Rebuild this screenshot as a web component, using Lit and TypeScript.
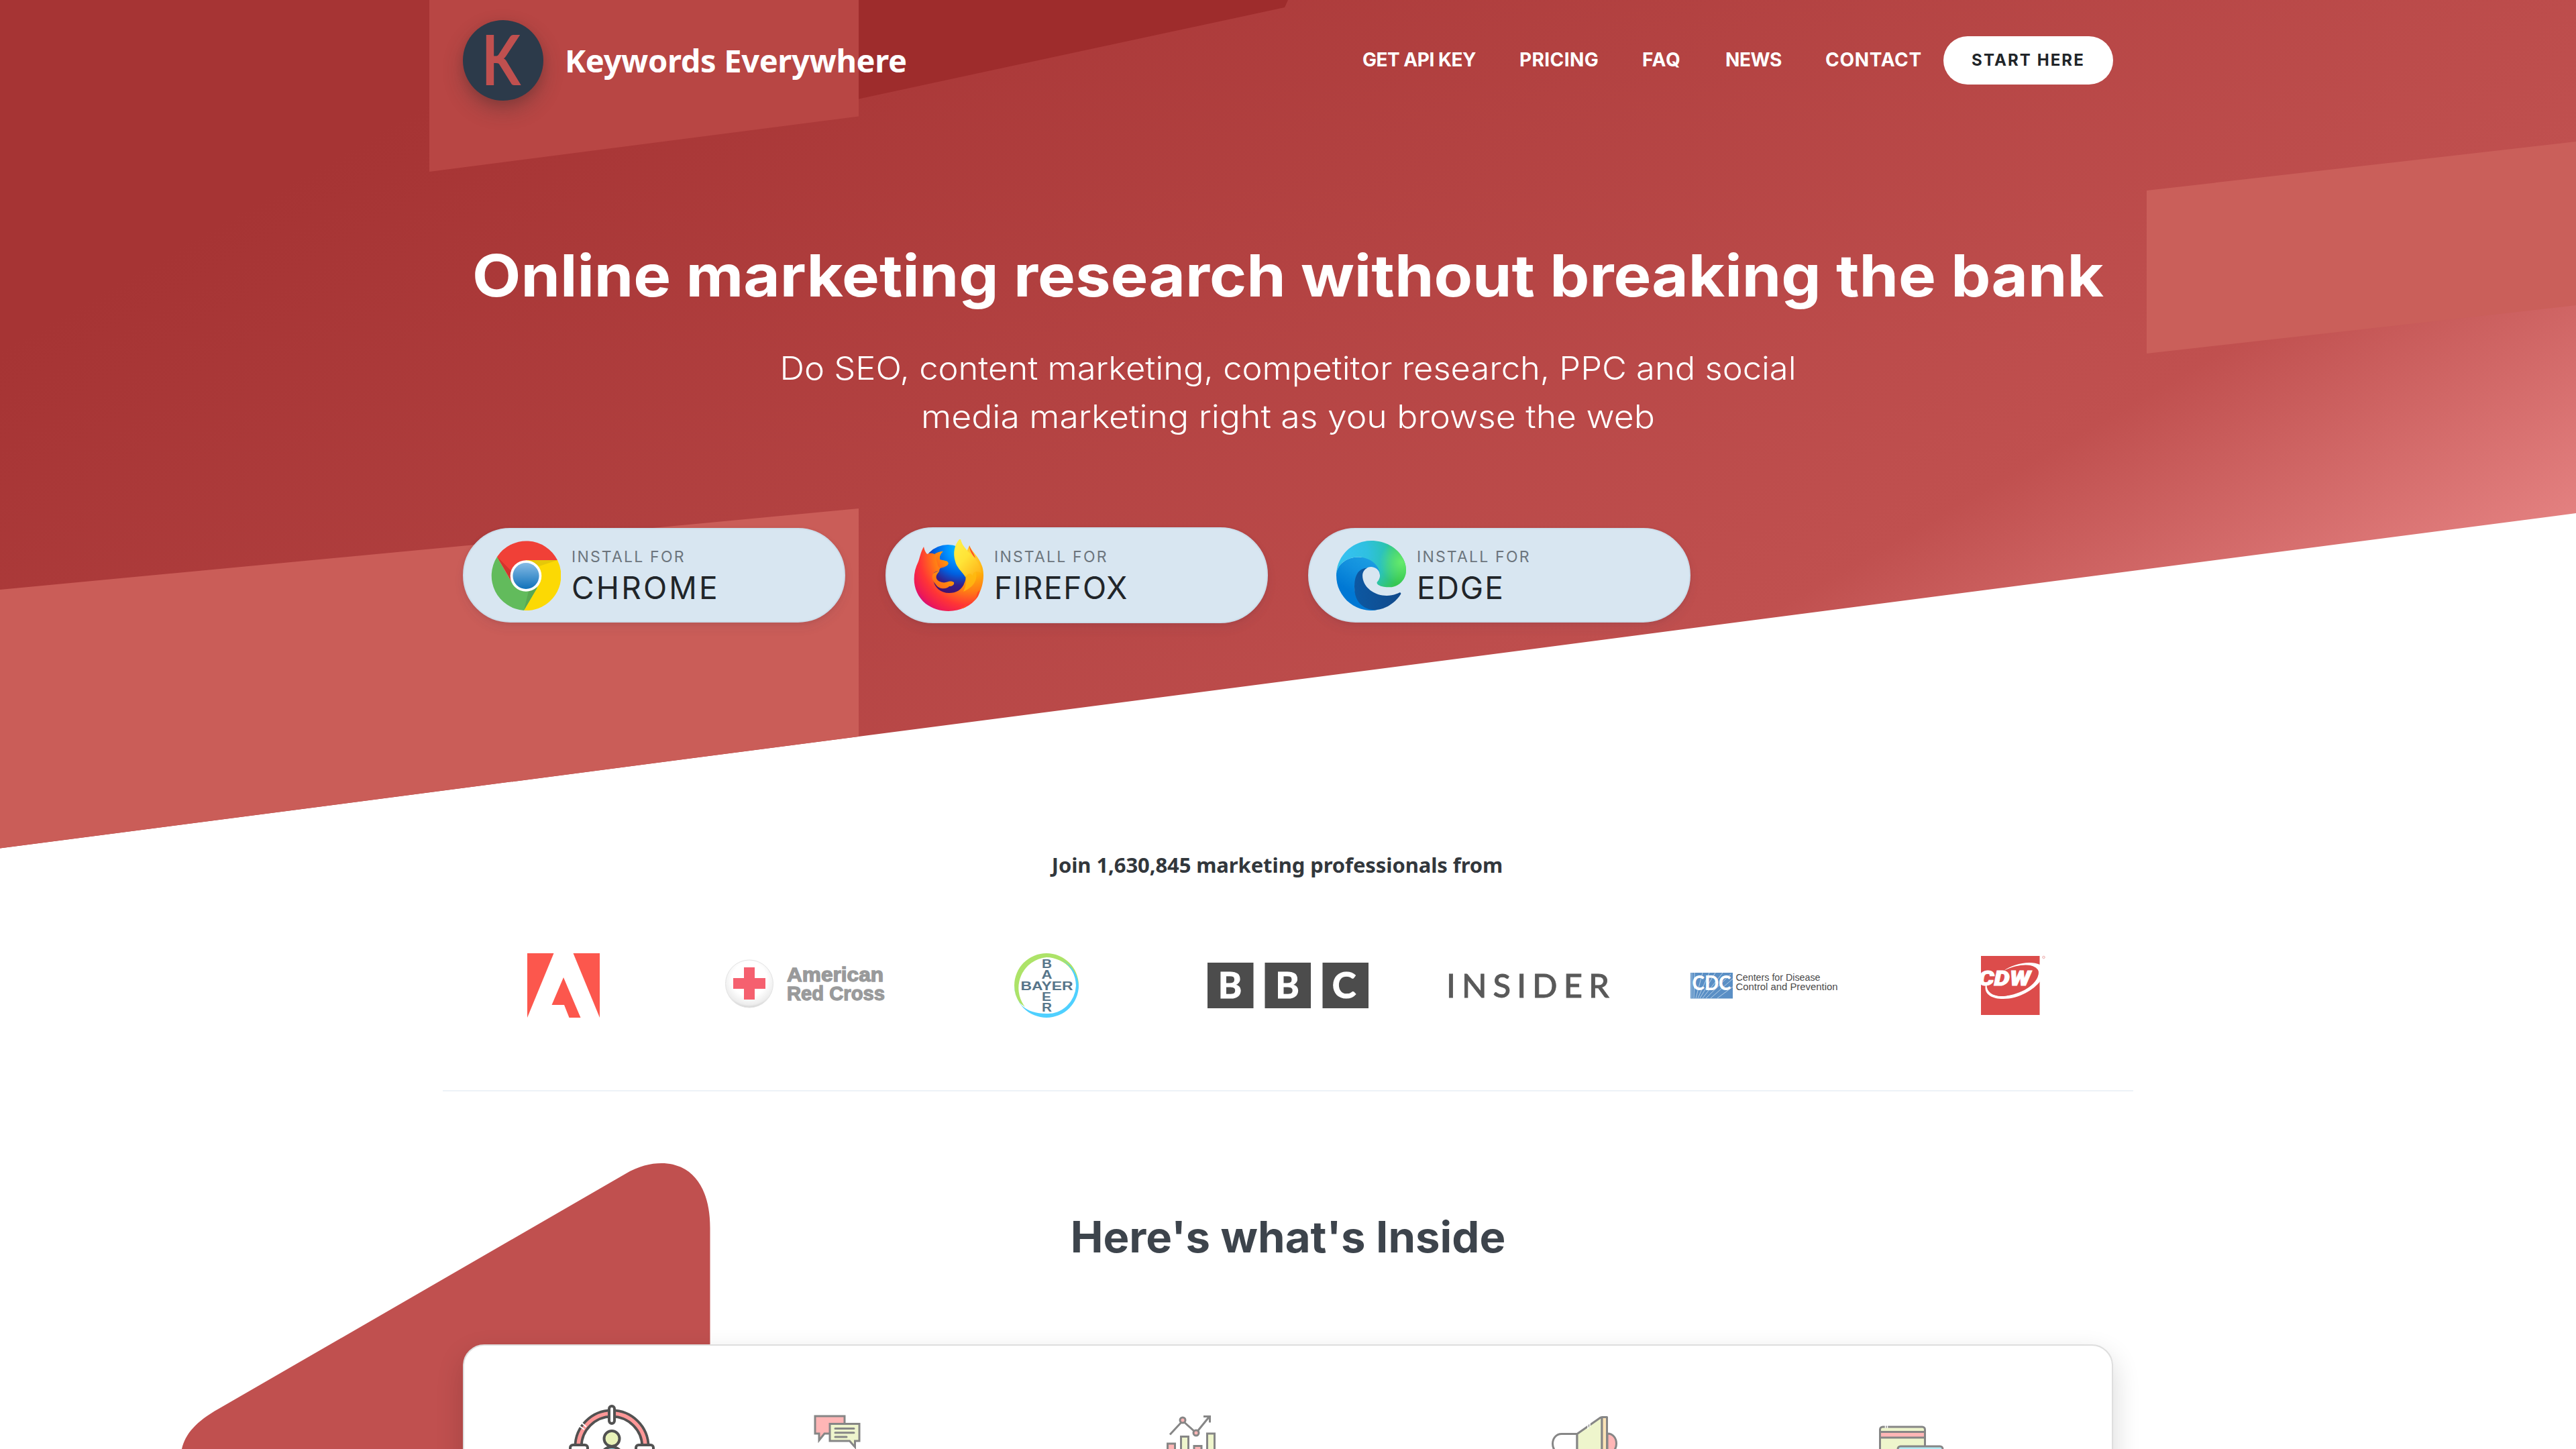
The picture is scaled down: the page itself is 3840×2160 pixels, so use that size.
import { LitElement, html, svg, css } from "lit";
import { customElement } from "lit/decorators.js";

interface NavItem { label: string; cls: string; }
const NAV: NavItem[] = [
  { label: "GET API KEY", cls: "n-api" },
  { label: "PRICING", cls: "n-pricing" },
  { label: "FAQ", cls: "n-faq" },
  { label: "NEWS", cls: "n-news" },
  { label: "CONTACT", cls: "n-contact" },
];

const chrome = html`<svg class="browser" viewBox="0 0 104 104">
  <defs><linearGradient id="cb" x1="0" y1="0" x2="0" y2="1"><stop offset="0" stop-color="#86bbe5"/><stop offset="1" stop-color="#1072ba"/></linearGradient></defs>
  <path fill="#62bb5c" d="M9 24A52 52 0 0 0 49 104L72 64 52 52 32 64Z"/>
  <path fill="#f04037" d="M9 24A52 52 0 0 1 99 29H52V52L32 64Z"/>
  <path fill="#fcd904" d="M99 29A52 52 0 0 1 49 104L72 64 52 52V29Z"/>
  <path fill="#d2352d" d="M9 24 29 58 31 46Z"/>
  <path fill="#e6c70a" d="M58 29H99L72 38Z"/>
  <path fill="#58a852" d="M49 104 69 70 56 75Z"/>
  <circle cx="52" cy="52.5" r="23.3" fill="#fff"/>
  <circle cx="52" cy="52.5" r="19.6" fill="url(#cb)"/>
</svg>`;

const firefox = html`<svg class="browser ff" viewBox="0 0 104 107">
  <defs>
    <radialGradient id="fg" gradientUnits="userSpaceOnUse" cx="70" cy="14" r="70"><stop offset="0" stop-color="#00c8ff"/><stop offset=".3" stop-color="#0090ff"/><stop offset=".55" stop-color="#0060e0"/><stop offset=".78" stop-color="#33208c"/><stop offset="1" stop-color="#45106b"/></radialGradient>
    <radialGradient id="fb" gradientUnits="userSpaceOnUse" cx="84" cy="24" r="104"><stop offset="0" stop-color="#ffd43a"/><stop offset=".3" stop-color="#ffae0a"/><stop offset=".52" stop-color="#ff7a16"/><stop offset=".72" stop-color="#ff3535"/><stop offset=".88" stop-color="#ee1a55"/><stop offset="1" stop-color="#c4068f"/></radialGradient>
    <linearGradient id="fy" x1="0" y1="0" x2=".8" y2="1"><stop offset="0" stop-color="#fff04a"/><stop offset=".5" stop-color="#ffe437"/><stop offset="1" stop-color="#ffb51a"/></linearGradient>
    <linearGradient id="fa" x1="0" y1="1" x2="1" y2="0"><stop offset="0" stop-color="#ff5a1f"/><stop offset="1" stop-color="#ffb300"/></linearGradient>
  </defs>
  <circle cx="51" cy="47" r="39" fill="url(#fg)"/>
  <path fill="url(#fb)" d="M15 11C10 20 9 28 7 33C-4 55-1 80 18 96C42 114 80 109 95 86C106 67 105 48 102 40C97 25 87 19 83 9L74 30C79 46 79 58 76 64C72 76 63 80 53 80C40 80 31 72 29 60C27 50 32 47 38 48C38 44 40 42 42 41C50 40 53 37 51 34C49 31 43 32 39 30C38 25 41 20 44 18C38 18 34 20 31 22C26 20 23 21 20 22C17 19 16 15 15 11Z"/>
  <path fill="url(#fa)" d="M38 48C26 48 25 58 32 66C38 76 50 74 53 70C57 70 61 68 60 64C52 60 50 66 42 64C34 62 30 56 38 48Z"/>
  <path fill="url(#fa)" opacity=".8" d="M44 18C38 18 32 24 34 32C36 38 36 42 40 43C50 41 53 37 51 34C49 31 43 32 39 30C38 25 41 20 44 18Z"/>
  <path fill="#ffbc12" opacity=".75" d="M66 38C78 52 82 62 74 78C92 70 96 58 92 46C84 50 74 48 66 38Z"/>
  <path fill="url(#fy)" d="M68 0H70C72 8 76 12 81 18C90 27 100 36 101 50C94 46 88 48 88 54C84 48 80 52 77 56C72 48 64 42 62 33C58 20 61 8 68 0Z"/>
  <path fill="#ff4b24" d="M98 76C98 84 94 88 90 92C95 88 92 80 98 76ZM78 100C74 104 70 103 68 102C72 102 76 100 78 97ZM83 9C83 17 88 24 92 28C90 20 85 16 83 9Z"/>
</svg>`;

const edge = html`<svg class="browser" viewBox="0 0 256 256">
  <defs>
    <linearGradient id="e1" gradientUnits="userSpaceOnUse" x1="58" y1="177" x2="236" y2="177"><stop offset="0" stop-color="#0c59a4"/><stop offset="1" stop-color="#114a8b"/></linearGradient>
    <linearGradient id="e2" gradientUnits="userSpaceOnUse" x1="130" y1="70" x2="40" y2="220"><stop offset="0" stop-color="#1b9de2"/><stop offset=".35" stop-color="#1290de"/><stop offset=".8" stop-color="#0078d4"/></linearGradient>
    <radialGradient id="e3" gradientUnits="userSpaceOnUse" cx="30" cy="50" r="215"><stop offset="0" stop-color="#35c1f1"/><stop offset=".4" stop-color="#2fc0e0"/><stop offset=".7" stop-color="#2bc3b5"/><stop offset="1" stop-color="#36c752"/></radialGradient>
    <radialGradient id="e4" gradientUnits="userSpaceOnUse" cx="240" cy="78" r="82"><stop offset="0" stop-color="#66eb6e"/><stop offset="1" stop-color="#66eb6e" stop-opacity="0"/></radialGradient>
  </defs>
  <path fill="url(#e2)" d="M105.7 241.4c-8.9-5.5-16.6-12.8-22.7-21.3-26.3-36-18.4-86.5 17.6-112.8 3.8-2.7 7.7-5.2 11.9-7.2 3.1-1.5 8.4-4.1 15.5-4 10.1.1 19.6 4.9 25.7 13 4 5.4 6.3 11.9 6.4 18.7 0-.2 24.500-67.600-80-67.600-43.900 0-80 29.700-80 66.200-.2 19.300 4 38.500 12.100 56 27.600 58.800 94.800 87.600 156.400 67.100-21.100 6.600-44.100 3.700-62.900-8.100z"/>
  <path fill="url(#e1)" d="M231.1 190.500c-3.400 1.800-6.900 3.400-10.500 4.700-11.500 4.300-23.600 6.500-35.900 6.500-47.300 0-88.500-32.500-88.500-74.300.1-11.400 6.400-21.900 16.400-27.300-42.800 1.800-46 46.400-46 72.500 0 73.900 60.300 81.400 75 81.400 7.900 0 19.800-2.300 27-4.600l1.300-.4c27.600-9.500 51-28.100 66.600-52.800 1.200-1.900.6-4.300-1.200-5.500-1.300-.8-2.900-.9-4.200-.2z"/>
  <path fill="url(#e3)" d="M152.300 148.900c-.8 1-3.300 2.500-3.300 5.700 0 2.600 1.700 5.100 4.700 7.200 14.400 10 41.500 8.700 41.600 8.700 10.700 0 21.100-2.900 30.300-8.300 18.800-11 30.400-31.100 30.400-52.900.3-22.400-8-37.300-11.300-43.900C223.500 23.900 177.700 0 128 0 58 0 1 56.200 0 126.200c.5-36.500 36.800-66 80-66 3.500 0 23.500.3 42 10.100 16.300 8.600 24.900 18.900 30.800 29.200 6.200 10.700 7.300 24.100 7.300 29.500.1 5.300-2.700 13.300-7.800 19.900z"/>
  <path fill="url(#e4)" d="M152.300 148.900c-.8 1-3.300 2.500-3.300 5.700 0 2.600 1.700 5.100 4.700 7.200 14.400 10 41.500 8.700 41.600 8.700 10.700 0 21.100-2.900 30.300-8.300 18.800-11 30.400-31.100 30.400-52.900.3-22.400-8-37.300-11.300-43.900C223.500 23.900 177.700 0 128 0v70c20 12 33 34 32 59 0 8-3 14-7.700 19.900z"/>
</svg>`;

const BROWSERS = [
  { name: "CHROME", icon: chrome, cls: "b-chrome" },
  { name: "FIREFOX", icon: firefox, cls: "b-firefox" },
  { name: "EDGE", icon: edge, cls: "b-edge" },
];

/* Each customer logo is drawn in a 360x120 cell. */
const adobe = svg`<g fill="#fc574d"><path d="M126 12h39.500L126 108z"/><path d="M194.500 12H234v96z"/><path d="M180 48l25.500 60H188.500L181 89H162.500z"/></g>`;

const redCross = svg`
  <defs><radialGradient id="rc" cx=".5" cy=".4" r=".6"><stop offset=".6" stop-color="#fff"/><stop offset=".9" stop-color="#ededed"/><stop offset="1" stop-color="#d2d2d2"/></radialGradient></defs>
  <circle cx="97" cy="57.500" r="35.500" fill="url(#rc)" stroke="#e3e3e3"/>
  <path fill="#f5606f" d="M89 33h16v16h16v16h-16v16H89V65H73V49h16z"/>
  <g class="arc-text"><text x="153" y="54" textLength="144" lengthAdjust="spacingAndGlyphs">American</text>
  <text x="153" y="82" textLength="146" lengthAdjust="spacingAndGlyphs">Red Cross</text></g>`;

const bayer = svg`
  <path fill="#ade368" fill-rule="evenodd" d="M132 60A48 48 0 0 1 228 60L226 72A47 47 0 0 0 180 18A46 46 0 0 0 148 92L140 86A46 46 0 0 1 132 60Z"/>
  <path fill="#4fd0ff" d="M228 60A48 48 0 0 1 132 60Q134 102 180 102A42 44 0 0 0 224 60Q223 36 203 21Q226 36 228 60Z"/>
  <g class="bayer-text">
    <text x="141.500" y="66.500" textLength="78" lengthAdjust="spacingAndGlyphs">BAYER</text>
    <text x="173" y="34" textLength="15" lengthAdjust="spacingAndGlyphs">B</text>
    <text x="172.500" y="50" textLength="16" lengthAdjust="spacingAndGlyphs">A</text>
    <text x="173" y="82.500" textLength="14" lengthAdjust="spacingAndGlyphs">E</text>
    <text x="173" y="98.500" textLength="15" lengthAdjust="spacingAndGlyphs">R</text>
  </g>`;

const bbc = svg`
  <g fill="#4c4c4c"><rect x="60" y="26" width="68.500" height="68"/><rect x="145.500" y="26" width="68.500" height="68"/><rect x="231.500" y="26" width="68.500" height="68"/></g>
  <g class="bbc-text"><text x="93.500" y="79">B</text><text x="179" y="79">B</text><text x="263.500" y="79">C</text></g>`;

const insider = svg`<text class="insider-text" x="56" y="78" textLength="243" lengthAdjust="spacing">INSIDER</text>`;

const cdc = svg`
  <rect x="60" y="41" width="63" height="38.500" fill="#5a8fc5"/>
  <g stroke="#b5cfe7" stroke-width="1" fill="none"><path d="M65 79 66 41M68 79 78 41M71 79 88 41M74 79 97 41M78 79 108 41M83 79 120 43M90 79 123 50M100 79 123 62M62 79 62 41"/></g>
  <text class="cdc-mark" x="62.500" y="67" textLength="58" lengthAdjust="spacingAndGlyphs">CDC</text>
  <g class="cdc-text"><text x="127.500" y="52.500" textLength="126" lengthAdjust="spacingAndGlyphs">Centers for Disease</text>
  <text x="127.500" y="66.500" textLength="152" lengthAdjust="spacingAndGlyphs">Control and Prevention</text></g>`;

const cdw = svg`
  <defs><clipPath id="cw"><rect x="133" y="16" width="88" height="88"/></clipPath></defs>
  <rect x="133" y="16" width="87.500" height="88" fill="#dc4c4b"/>
  <g clip-path="url(#cw)">
    <path fill="#fff" fill-rule="evenodd" d="M167 38C180 28 206 22 221 29V54C212 66 190 80 166 80C146 80 134 70 142 54C139 68 148 76 164 76C188 75 213 62 218 46C223 28 196 24 167 38Z"/>
    <path fill="#dc4c4b" d="M167 38.500C190 27 214 28 218.500 38C222 50 198 72 166 76C150 76 142 68 142.500 58Z"/>
    <text class="cdw-text" x="129" y="59.500" textLength="78" lengthAdjust="spacingAndGlyphs">CDW</text>
  </g>
  <circle cx="226.500" cy="18" r="1.700" fill="none" stroke="#eba3a2"/>`;

const LOGOS = [adobe, redCross, bayer, bbc, insider, cdc, cdw];

const target = svg`<g fill="none">
  <circle cx="912" cy="2157" r="50" stroke="#515151" stroke-width="13"/>
  <circle cx="912" cy="2157" r="50" stroke="#ff9797" stroke-width="5.500"/>
  <path d="M867 2121 874 2127M864 2126 871 2131" stroke="#fff" stroke-width="2"/>
  <g fill="#fff" stroke="#515151" stroke-width="4"><rect x="908" y="2096" width="8" height="26" rx="4"/><rect x="850" y="2154" width="26" height="12" rx="4"/><rect x="948" y="2154" width="26" height="12" rx="4"/></g>
  <path d="M895 2175C895 2151 929 2151 929 2175Z" fill="#8fdcee" stroke="#515151" stroke-width="4"/>
  <circle cx="912" cy="2144.500" r="11.500" fill="#e8f2b8" stroke="#515151" stroke-width="4"/>
</g>`;

const chat = svg`<g stroke="#868686" stroke-width="3" stroke-linejoin="miter">
  <path fill="#ffb6b6" d="M1215 2111H1259V2137H1229L1221 2147V2137H1215Z"/>
  <path fill="#eef5cc" d="M1237 2122.500H1281V2148H1274.500V2157L1266.500 2148H1237Z"/>
  <path stroke-linecap="round" d="M1245 2129.500H1273M1245 2135.700H1273M1245 2142H1262"/>
</g>`;

const chart = svg`<g stroke="#868686" stroke-width="3">
  <path fill="none" d="M1744 2138.500 1763 2118 1783 2136 1802.500 2112M1794 2111.500H1803.500V2120.500"/>
  <circle cx="1763" cy="2117" r="4" fill="#ffb6b6"/><circle cx="1783" cy="2136" r="4" fill="#ffb6b6"/>
  <path fill="#ffb6b6" d="M1740.500 2170V2152H1751.500V2170M1780 2170V2155.500H1791V2170"/>
  <path fill="#eef5cc" d="M1760.500 2170V2141.500H1771.500V2170M1799.500 2170V2137H1810.500V2170"/>
</g>`;

const horn = svg`<g stroke="#868686" stroke-width="3" stroke-linejoin="round">
  <path fill="#ffb6b6" d="M2396 2137C2414 2137 2414 2167 2396 2167Z"/>
  <path fill="#fff" d="M2351 2137.500H2328C2310 2137.500 2310 2167 2328 2167H2351Z"/>
  <path fill="#eef5cc" d="M2351 2137.500 2386 2113H2388V2170H2351Z"/>
  <rect x="2388" y="2112.500" width="7.500" height="60" fill="#fbe3b6"/>
  <path stroke="#fff" stroke-width="1.500" d="M2367 2122V2130M2370 2120V2127"/>
</g>`;

const cards = svg`<g stroke="#868686" stroke-width="3">
  <rect x="2802.500" y="2127" width="67" height="50" rx="4" fill="#eef5cc"/>
  <rect x="2802.500" y="2134.500" width="67" height="8.500" fill="#ffb6b6"/>
  <rect x="2829" y="2156" width="67" height="40" rx="4" fill="#b5ebf5"/>
  <path stroke="#fff" stroke-width="1.500" d="M2810.500 2125V2129M2813.500 2125V2129"/>
</g>`;

const FEATURES = [
  { art: target, box: "840 2084 144 76", cls: "f-target" },
  { art: chat, box: "1208 2084 80 76", cls: "f-chat" },
  { art: chart, box: "1732 2084 88 76", cls: "f-chart" },
  { art: horn, box: "2306 2084 112 76", cls: "f-horn" },
  { art: cards, box: "2794 2084 110 76", cls: "f-cards" },
];

@customElement("app-root")
export class AppRoot extends LitElement {
  static styles = css`
    :host { display: block; width: 3840px; height: 2160px; overflow: hidden; position: relative; background: #fff; font-family: Inter, "Open Sans", sans-serif; color: #212529; }
    svg { display: block; }
    .hero { position: relative; height: 1265px; box-sizing: border-box; }
    .backdrop, .blob { position: absolute; inset: 0; }
    .wrap { position: relative; width: 2460px; margin: 0 auto; }
    header { height: 180px; display: flex; align-items: center; justify-content: space-between; }
    .brand { display: flex; align-items: center; gap: 32px; }
    .mark { width: 120px; height: 120px; border-radius: 50%; background: #2c3a4a; box-shadow: 0 14px 30px rgba(50, 50, 50, .32), 0 4px 14px rgba(0, 0, 0, .1); display: flex; align-items: center; justify-content: center; }
    .mark svg { overflow: visible; }
    .mark text { font: 700 104px Lato, sans-serif; fill: #c0504f; }
    .name { font: 700 47px/60px "Noto Sans", sans-serif; color: #fff; white-space: nowrap; letter-spacing: -.35px; }
    nav { display: flex; align-items: center; font-size: 28px; font-weight: 700; color: #fff; line-height: 40px; }
    .link { margin-right: 65px; padding-bottom: 2px; white-space: nowrap; }
    .n-api { width: 169px; letter-spacing: -.5px; }
    .n-pricing { width: 118px; letter-spacing: .4px; }
    .n-faq { width: 59px; letter-spacing: .7px; }
    .n-news { width: 84px; letter-spacing: -.4px; }
    .n-contact { width: 142px; margin-right: 34px; letter-spacing: .7px; }
    .start { width: 253px; height: 72px; border-radius: 36px; background: #fff; color: #212529; font-size: 24px; letter-spacing: 2.1px; display: flex; align-items: center; justify-content: center; white-space: nowrap; }
    h1 { margin: 177px 0 0; font-size: 87px; line-height: 108px; font-weight: 700; text-align: center; color: #fff; white-space: nowrap; transform: scaleX(1.08); }
    .sub { margin: 48px 0 0; font-size: 48px; line-height: 72px; font-weight: 300; text-align: center; color: #fff; white-space: nowrap; }
    .s1 { display: block; transform: scaleX(1.0555); }
    .s2 { display: block; transform: scaleX(1.077); }
    .installs { margin-top: 129px; display: flex; align-items: center; gap: 60px; }
    .install { width: 570px; height: 141px; box-sizing: border-box; border: 2px solid #cdddea; border-radius: 71px; background: #d8e6f1; display: flex; align-items: center; gap: 16px; padding-left: 40px; box-shadow: 0 8px 16px rgba(50, 50, 93, .07), 0 2px 6px rgba(0, 0, 0, .06); }
    .b-firefox { height: 143px; }
    .browser { width: 104px; height: 104px; }
    .ff { height: 107px; }
    .label { display: flex; flex-direction: column; }
    .small { font-size: 23px; line-height: 36px; letter-spacing: 2.2px; color: #6c757d; }
    .big { font-size: 46px; line-height: 56px; letter-spacing: 2px; color: #212529; }
    .b-chrome .big { letter-spacing: 3.2px; }
    .b-firefox .big { letter-spacing: 1.600px; }
    .join { font: 700 31px/48px "Noto Sans", sans-serif; text-align: center; padding-right: 32px; color: #32373c; white-space: nowrap; letter-spacing: -.1px; }
    .logos { width: 2520px; margin: 96px auto 0; padding-bottom: 96px; border-bottom: 2px solid #edf2f7; display: grid; grid-template-columns: repeat(7, 360px); }
    .arc-text { font: 700 29px "Liberation Sans", sans-serif; fill: #999a9b; stroke: #999a9b; stroke-width: 1.3; }
    .bayer-text { font: 700 18px "Liberation Sans", sans-serif; fill: #57758a; }
    .bbc-text { font: 700 54px Lato, sans-serif; fill: #fff; stroke: #fff; stroke-width: 1.2; text-anchor: middle; }
    .insider-text { font: 500 49px Lato, sans-serif; fill: #595959; stroke: #595959; stroke-width: .8; }
    .cdc-mark { font: 900 31px Lato, sans-serif; fill: #fff; }
    .cdc-text { font: 400 15.500px "Liberation Sans", sans-serif; fill: #4a4a4a; }
    .cdw-text { font: italic 900 31px Roboto, sans-serif; fill: #fff; stroke: #fff; stroke-width: 1; }
    h2 { margin: 177px 0 0; text-align: center; font-size: 64px; line-height: 80px; font-weight: 700; color: #3d444c; white-space: nowrap; transform: scaleX(1.02); }
    .card { margin-top: 120px; height: 300px; box-sizing: border-box; border: 2px solid #dedede; border-radius: 32px; background: #fff; box-shadow: 0 16px 40px rgba(0, 0, 0, .16); padding: 78px 0 0 148px; display: flex; align-items: flex-start; }
    .f-chat { margin-left: 224px; }
    .f-chart { margin-left: 444px; }
    .f-horn { margin-left: 486px; }
    .f-cards { margin-left: 376px; }
  `;

  render() {
    return html`
      <svg class="blob" width="3840" height="2160" viewBox="0 0 3840 2160"><path fill="#c0504f" d="M326 2100 932 1750C952 1738 970 1734 986 1734C1030 1734 1058.500 1768 1058.500 1830V2160H271C276 2138 292 2119 326 2100Z"/></svg>
      <section class="hero">
        <svg class="backdrop" width="3840" height="1265" viewBox="0 0 3840 1265">
          <defs>
            <linearGradient id="bg" gradientUnits="userSpaceOnUse" x1="0" y1="0" x2="1507.500" y2="2611"><stop offset=".15" stop-color="#a63434"/><stop offset=".7" stop-color="#c0504f"/><stop offset=".94" stop-color="#f69a9a"/></linearGradient>
            <clipPath id="slope"><path d="M0 0H3840V765L0 1264.500Z"/></clipPath>
          </defs>
          <g clip-path="url(#slope)">
            <rect width="3840" height="1265" fill="url(#bg)"/>
            <path fill="#b84644" d="M640 0H1280V173.500L640 256Z"/>
            <path fill="#9e2c2c" d="M1280 0H1920L1915 11 1280 147.500Z"/>
            <path fill="#ca5f5a" d="M3200 284 3840 211V455L3200 527Z"/>
            <path fill="#ca5d58" d="M0 879 1280 758V1265H0Z"/>
          </g>
        </svg>
        <div class="wrap">
          <header>
            <div class="brand">
              <div class="mark"><svg width="120" height="120" viewBox="0 0 120 120"><text x="28" y="97" textLength="58" lengthAdjust="spacingAndGlyphs">K</text></svg></div>
              <div class="name">Keywords Everywhere</div>
            </div>
            <nav>
              ${NAV.map((n) => html`<span class="link ${n.cls}">${n.label}</span>`)}
              <span class="start">START HERE</span>
            </nav>
          </header>
          <h1>Online marketing research without breaking the bank</h1>
          <p class="sub"><span class="s1">Do SEO, content marketing, competitor research, PPC and social</span><span class="s2">media marketing right as you browse the web</span></p>
          <div class="installs">
            ${BROWSERS.map((b) => html`<div class="install ${b.cls}">${b.icon}<div class="label"><span class="small">INSTALL FOR</span><span class="big">${b.name}</span></div></div>`)}
          </div>
        </div>
      </section>
      <div class="join">Join 1,630,845 marketing professionals from</div>
      <div class="logos">${LOGOS.map((l) => html`<svg width="360" height="120" viewBox="0 0 360 120">${l}</svg>`)}</div>
      <div class="wrap">
        <h2>Here's what's Inside</h2>
        <div class="card">
          ${FEATURES.map((f) => html`<svg class=${f.cls} width=${f.box.split(" ")[2]} height="76" viewBox=${f.box}>${f.art}</svg>`)}
        </div>
      </div>
    `;
  }
}
